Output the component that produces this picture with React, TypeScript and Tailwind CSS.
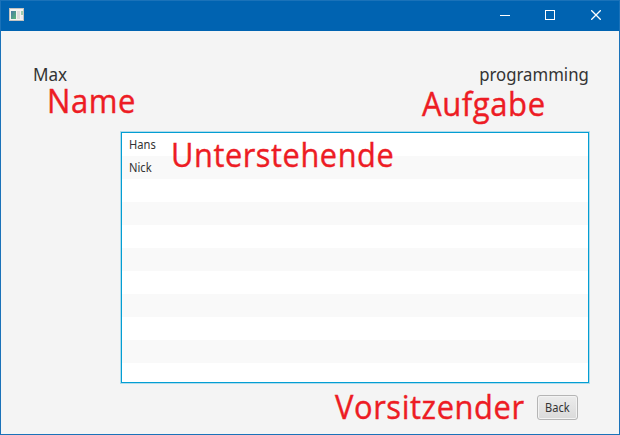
const employees = ["Hans", "Nick", "", "", "", "", "", "", "", "", ""];

function AppIcon() {
  return (
    <svg width="15" height="13" viewBox="0 0 15 13" shapeRendering="crispEdges">
      <defs>
        <linearGradient id="pane" x1="0" y1="0" x2="1" y2="1">
          <stop offset="0" stopColor="#4779a5" />
          <stop offset="1" stopColor="#5bb878" />
        </linearGradient>
      </defs>
      <rect width="15" height="13" fill="#c4c3c0" />
      <rect x="1" y="1" width="13" height="11" fill="#f4f3f1" />
      <rect x="2" y="3" width="5" height="8" fill="url(#pane)" />
      <rect x="8" y="3" width="3" height="8" fill="#dedddd" />
      <rect x="12" y="3" width="2" height="4" fill="#9fcdb0" />
      <rect x="12" y="8" width="2" height="3" fill="#ebeaf2" />
    </svg>
  );
}

function TitleBar() {
  return (
    <header className="flex h-[30px] shrink-0 items-start justify-between bg-[#0063b1] pl-2">
      <div className="pt-[7px]">
        <AppIcon />
      </div>
      <div className="flex gap-[35px] pt-[9px] pr-[18px]">
        <svg width="10" height="10" className="-ml-px mr-px" shapeRendering="crispEdges">
          <path d="M0 5.5H10" stroke="#fff" />
        </svg>
        <svg width="10" height="10" className="-ml-px mr-px" shapeRendering="crispEdges">
          <rect x="0.5" y="0.5" width="9" height="9" fill="none" stroke="#fff" />
        </svg>
        <svg width="10" height="10">
          <path d="M0.2 0.2L9.8 9.8M9.8 0.2L0.2 9.8" stroke="#fff" strokeWidth="1.3" />
        </svg>
      </div>
    </header>
  );
}

const note =
  "absolute origin-left whitespace-nowrap font-['Open_Sans',sans-serif] text-[32px] leading-[40px] tracking-[0.6px] text-[#ed1c24] [-webkit-text-stroke:0.4px_#ed1c24]";

export default function App() {
  return (
    <div className="relative flex h-[435px] w-[620px] flex-col overflow-hidden border border-[#1a72b9] bg-[#f4f4f4] font-['Noto_Sans',sans-serif] text-[#333333]">
      <TitleBar />
      <main className="flex flex-1 flex-col pr-[30px] pl-8">
        <div className="flex justify-between pt-[31px] text-[18px] leading-6">
          <span className="origin-left scale-x-[0.95]">Max</span>
          <span className="origin-right scale-x-[0.93]">programming</span>
        </div>
        <div className="mt-[46px] ml-[88px] h-[251px] shrink-0 overflow-hidden border border-[#039ed3] bg-white shadow-[0_0_0_1px_#b0dcec]">
          {employees.map((name, i) => (
            <div
              key={i}
              className="flex h-[23px] items-center pl-[7px] text-[12px] odd:bg-white even:bg-[#f9f9f9]"
            >
              <span className="origin-left scale-x-[0.93]">{name}</span>
            </div>
          ))}
        </div>
        <div className="flex justify-end pt-3 pr-[11px]">
          <button className="flex h-[25px] w-[41px] items-center justify-center rounded-[3px] border border-[#b5b5b5] bg-linear-to-b from-[#ececec] to-[#dadada] text-[12px] shadow-[inset_0_0_0_1px_#f3f3f3]">
            <span className="scale-x-[0.92]">Back</span>
          </button>
        </div>
      </main>
      <span className={`${note} top-[80px] left-[46px] scale-x-[0.97]`}>Name</span>
      <span className={`${note} top-[83px] left-[421px] scale-x-[0.97]`}>Aufgabe</span>
      <span className={`${note} top-[134px] left-[170px] scale-x-[0.96]`}>Unterstehende</span>
      <span className={`${note} top-[386px] left-[334px] scale-x-[0.965]`}>Vorsitzender</span>
    </div>
  );
}
